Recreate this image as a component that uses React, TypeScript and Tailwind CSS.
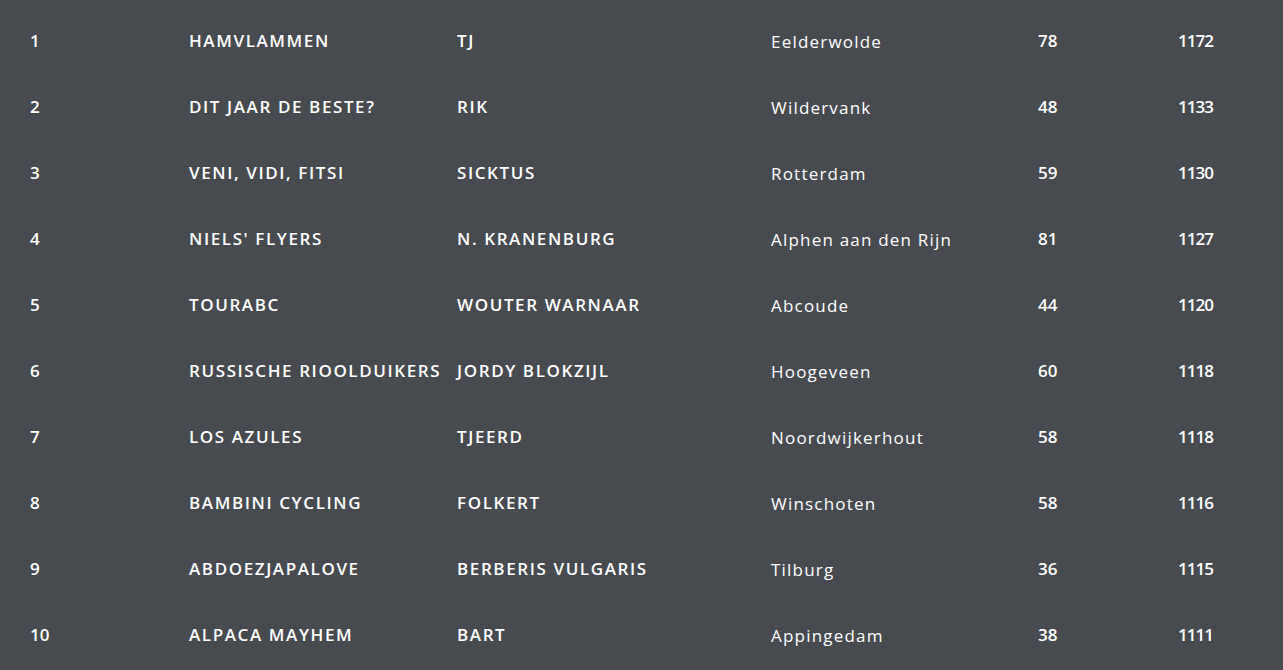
import React from "react";

const rows: [string, string, string, string, string, string][] = [
  ["1", "HAMVLAMMEN", "TJ", "Eelderwolde", "78", "1172"],
  ["2", "DIT JAAR DE BESTE?", "RIK", "Wildervank", "48", "1133"],
  ["3", "VENI, VIDI, FITSI", "SICKTUS", "Rotterdam", "59", "1130"],
  ["4", "NIELS' FLYERS", "N. KRANENBURG", "Alphen aan den Rijn", "81", "1127"],
  ["5", "TOURABC", "WOUTER WARNAAR", "Abcoude", "44", "1120"],
  ["6", "RUSSISCHE RIOOLDUIKERS", "JORDY BLOKZIJL", "Hoogeveen", "60", "1118"],
  ["7", "LOS AZULES", "TJEERD", "Noordwijkerhout", "58", "1118"],
  ["8", "BAMBINI CYCLING", "FOLKERT", "Winschoten", "58", "1116"],
  ["9", "ABDOEZJAPALOVE", "BERBERIS VULGARIS", "Tilburg", "36", "1115"],
  ["10", "ALPACA MAYHEM", "BART", "Appingedam", "38", "1111"],
];

export default function App() {
  return (
    <div
      className="w-[1283px] h-[670px] bg-[#474b50] text-white pt-[8px] pl-[30px] overflow-hidden"
      style={{ fontFamily: '"Open Sans", "Liberation Sans", sans-serif' }}
    >
      {rows.map((r) => (
        <div
          key={r[0]}
          className="grid grid-cols-[159px_268px_314px_267px_140px_1fr] h-[66px] items-center"
        >
          <div className="text-[17px] font-semibold tracking-[0px]">{r[0]}</div>
          <div className="text-[17px] font-semibold tracking-[1.6px] whitespace-nowrap">{r[1]}</div>
          <div className="text-[17px] font-semibold tracking-[1.6px] whitespace-nowrap">{r[2]}</div>
          <div className="text-[17px] font-normal tracking-[1.2px] pt-[2px] whitespace-nowrap">{r[3]}</div>
          <div className="text-[17px] font-semibold tracking-[0px]">{r[4]}</div>
          <div className="text-[17px] font-semibold tracking-[-1px]">{r[5]}</div>
        </div>
      ))}
    </div>
  );
}
